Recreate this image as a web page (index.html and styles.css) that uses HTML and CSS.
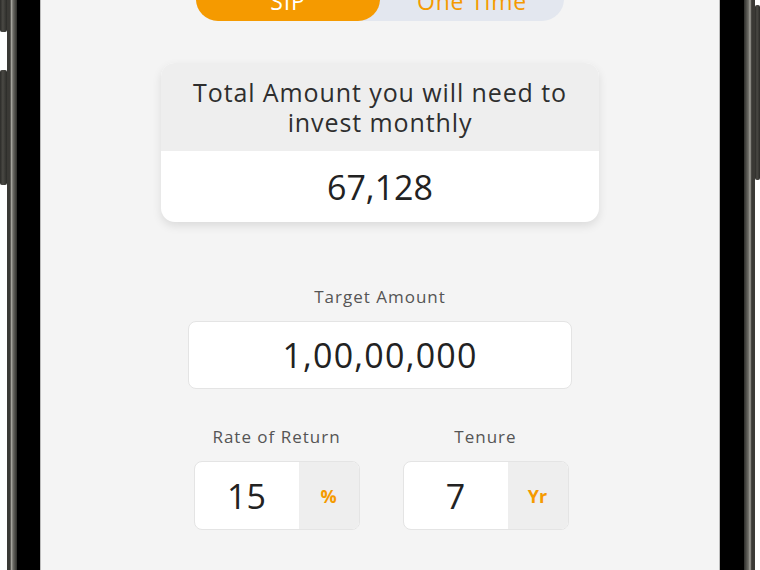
FILE: index.html
```html
<!DOCTYPE html>
<html>
<head>
<meta charset="utf-8">
<link rel="stylesheet" href="styles.css">
</head>
<body>
<div class="phone">
  <div class="btns-left">
    <div class="btn b1"></div>
    <div class="btn b2"></div>
  </div>
  <div class="frame"></div>
  <div class="bezel bezel-l"></div>
  <div class="screen">
    <div class="toggle">
      <div class="tab active">SIP</div>
      <div class="tab">One Time</div>
    </div>
    <div class="card">
      <div class="card-head">Total Amount you will need to invest monthly</div>
      <div class="card-body">67,128</div>
    </div>
    <div class="field">
      <div class="label">Target Amount</div>
      <div class="input wide">1,00,00,000</div>
    </div>
    <div class="row">
      <div class="field small">
        <div class="label">Rate of Return</div>
        <div class="input split">
          <div class="val">15</div>
          <div class="unit">%</div>
        </div>
      </div>
      <div class="field small">
        <div class="label">Tenure</div>
        <div class="input split">
          <div class="val">7</div>
          <div class="unit">Yr</div>
        </div>
      </div>
    </div>
  </div>
  <div class="bezel bezel-r"></div>
  <div class="frame frame-r"></div>
  <div class="btns-right">
    <div class="btn b3"></div>
  </div>
</div>
</body>
</html>
```

FILE: styles.css
```css
* { box-sizing: border-box; }
html, body { margin: 0; padding: 0; }
body {
  width: 760px;
  height: 570px;
  overflow: hidden;
  background: #ffffff;
  font-family: "Open Sans", "Noto Sans", sans-serif;
}
.phone {
  display: flex;
  height: 570px;
}
.btns-left {
  width: 7px;
  display: flex;
  flex-direction: column;
}
.btn {
  background: linear-gradient(90deg, #2b2b28 0, #4a4944 40%, #2b2b28 100%);
  border-radius: 2px;
}
.b1 { height: 36px; margin-top: -4px; width: 7px; }
.b2 { height: 115px; margin-top: 38px; width: 7px; }
.frame {
  width: 10px;
  background: linear-gradient(90deg, #3a3935 0, #3a3935 30%, #a4a39c 45%, #6d6c66 60%, #2c2c29 100%);
}
.frame-r {
  width: 11px;
  background: linear-gradient(90deg, #2c2c29 0, #6d6c66 40%, #a4a39c 55%, #3a3935 70%, #3a3935 100%);
}
.bezel { background: #000; }
.bezel-l { width: 23px; }
.bezel-r { width: 24px; }
.btns-right {
  width: 5px;
  display: flex;
  flex-direction: column;
}
.b3 { height: 175px; margin-top: 5px; width: 5px; }
.screen {
  width: 680px;
  background: #f4f4f4;
  display: flex;
  flex-direction: column;
  align-items: center;
  border-left: 1px solid #bdbdbd;
  border-right: 1px solid #bdbdbd;
}
.toggle {
  margin-top: -23px;
  width: 368px;
  height: 44px;
  display: flex;
  background: #e3e7ef;
  border-radius: 22px;
  flex-shrink: 0;
}
.tab {
  flex: 1;
  display: flex;
  align-items: center;
  justify-content: center;
  font-size: 23px;
  letter-spacing: 0.8px;
  padding-top: 3px;
  color: #f59a00;
}
.tab.active {
  background: #f59a00;
  color: #fff;
  border-radius: 22px;
}
.card {
  margin-top: 42px;
  width: 438px;
  border-radius: 14px;
  overflow: hidden;
  background: #fff;
  box-shadow: 0 4px 10px rgba(0,0,0,0.10);
}
.card-head {
  background: #eeeeee;
  height: 88px;
  padding: 14px 20px 0;
  text-align: center;
  font-size: 25px;
  font-weight: 500;
  letter-spacing: 0.9px;
  line-height: 30px;
  color: #2e2e2e;
}
.card-body {
  height: 71px;
  display: flex;
  align-items: center;
  justify-content: center;
  font-size: 34px;
  font-weight: 500;
  color: #222;
}
.field {
  display: flex;
  flex-direction: column;
  align-items: center;
}
.card + .field { margin-top: 64px; }
.label {
  font-size: 17px;
  line-height: 22px;
  letter-spacing: 1px;
  color: #555;
}
.input {
  margin-top: 13px;
  background: #fff;
  border: 1px solid #e4e4e4;
  border-radius: 8px;
  height: 68px;
}
.wide {
  width: 384px;
  display: flex;
  align-items: center;
  justify-content: center;
  font-size: 34px;
  font-weight: 500;
  letter-spacing: 1.2px;
  color: #222;
}
.row {
  margin-top: 37px;
  display: flex;
  gap: 43px;
  margin-left: 2px;
}
.split {
  width: 166px;
  display: flex;
  overflow: hidden;
  height: 69px;
  margin-top: 13px;
}
.val {
  width: 104px;
  display: flex;
  align-items: center;
  justify-content: center;
  font-size: 34px;
  font-weight: 500;
  color: #222;
}
.unit {
  flex: 1;
  background: #eeeeee;
  display: flex;
  align-items: center;
  justify-content: center;
  font-size: 18px;
  font-weight: 700;
  color: #f59a00;
}
```
